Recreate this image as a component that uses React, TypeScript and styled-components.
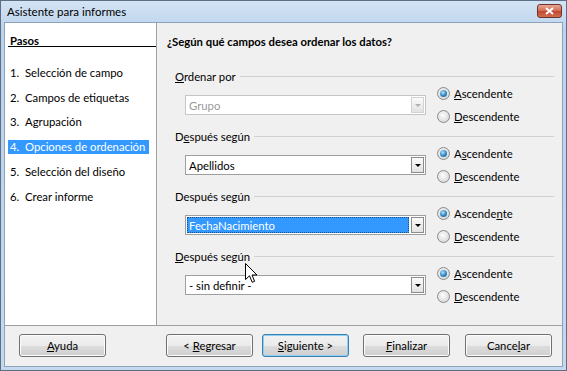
import React from 'react';
import styled, { createGlobalStyle } from 'styled-components';

const FONT = `Lato, "Noto Sans", "Liberation Sans", sans-serif`;

const GlobalStyle = createGlobalStyle`
  html, body { margin: 0; padding: 0; background: #fff; }
  body { font-family: ${FONT}; font-size: 11.3px; color: #000; }
`;

const Window = styled.div`
  position: relative;
  width: 567px;
  height: 371px;
  box-sizing: border-box;
  display: flex;
  flex-direction: column;
  border: 1px solid #5d6f86;
  background: linear-gradient(#d3e3f4, #bcd3ec 30px, #c4d8ee);
`;

const TitleBar = styled.div`
  height: 21px;
  display: flex;
  align-items: center;
  justify-content: space-between;
  padding: 0 4px 0 6px;
`;

const Title = styled.span`
  font-size: 11.5px;
  color: #000;
`;

const CloseButton = styled.div`
  width: 25px;
  height: 14px;
  margin-top: -2px;
  box-sizing: border-box;
  border: 1px solid #6b3329;
  border-radius: 3px;
  background: linear-gradient(#e8a895, #d26a52 50%, #c2452d 51%, #d06e4f);
  display: flex;
  align-items: center;
  justify-content: center;
`;

const Client = styled.div`
  flex: 1;
  margin: 0 3px 3px;
  border: 1px solid #8da2bb;
  background: #f0f0f0;
  display: flex;
  flex-direction: column;
`;

const Main = styled.div`
  height: 302px;
  display: flex;
  border-bottom: 1px solid #a0a0a0;
`;

const Sidebar = styled.div`
  width: 151px;
  background: #fff;
  border-right: 1px solid #a0a0a0;
  padding-top: 12px;
`;

const StepsHeader = styled.div`
  margin-left: 3px;
  padding-left: 2px;
  line-height: 11px;
  font-weight: bold;
  text-decoration: underline;
  border-bottom: 1px solid #000;
`;

const StepList = styled.div`
  margin-top: 13px;
`;

const StepRow = styled.div`
  height: 24.8px;
  display: flex;
  align-items: center;
  padding-left: 3px;
`;

const StepLabel = styled.div<{ $active?: boolean }>`
  width: 141px;
  height: 14px;
  display: flex;
  align-items: center;
  padding-left: 2px;
  box-sizing: border-box;
  background: ${({ $active }) => ($active ? '#3399ff' : 'transparent')};
  color: ${({ $active }) => ($active ? '#fff' : '#000')};
`;

const StepNum = styled.span`
  width: 15px;
`;

const Content = styled.div`
  flex: 1;
  padding: 11px 8px 0 10px;
`;

const Heading = styled.div`
  font-weight: bold;
  line-height: 16px;
  margin-bottom: 18px;
`;

const Group = styled.div`
  height: 60px;
  padding-left: 8px;
`;

const GroupHeader = styled.div`
  height: 16px;
  display: flex;
  align-items: center;
  gap: 4px;
  &::after {
    content: '';
    flex: 1;
    height: 1px;
    background: #d0d0d0;
  }
`;

const GroupBody = styled.div`
  display: flex;
  padding-left: 10px;
`;

const ComboSlot = styled.div`
  padding-top: 11px;
  margin-right: 11px;
`;

const Combo = styled.div<{ $disabled?: boolean }>`
  width: 241px;
  height: 20px;
  box-sizing: border-box;
  border: 1px solid ${({ $disabled }) => ($disabled ? '#c6c6c6' : '#9e9e9e')};
  background: #fff;
  padding: 1px;
  display: flex;
`;

const ComboText = styled.div<{ $disabled?: boolean; $selected?: boolean }>`
  flex: 1;
  display: flex;
  align-items: center;
  padding-left: 2px;
  margin-right: 2px;
  background: ${({ $selected }) => ($selected ? '#3399ff' : 'transparent')};
  color: ${({ $disabled, $selected }) => ($selected ? '#fff' : $disabled ? '#9a9a9a' : '#000')};
  outline: ${({ $selected }) => ($selected ? '1px dotted #1a4f88' : 'none')};
  outline-offset: -1px;
`;

const ComboButton = styled.div<{ $disabled?: boolean }>`
  width: 13px;
  box-sizing: border-box;
  border: 1px solid ${({ $disabled }) => ($disabled ? '#d2d2d2' : '#8c8c8c')};
  background: linear-gradient(#fafafa, #e2e2e2);
  display: flex;
  align-items: center;
  justify-content: center;
  &::after {
    content: '';
    border-left: 3px solid transparent;
    border-right: 3px solid transparent;
    border-top: 3px solid ${({ $disabled }) => ($disabled ? '#b0b0b0' : '#000')};
  }
`;

const Radios = styled.div`
  display: flex;
  flex-direction: column;
  margin-top: -2px;
`;

const RadioRow = styled.div`
  height: 23px;
  display: flex;
  align-items: center;
  gap: 4px;
`;

const RadioDot = styled.span<{ $checked?: boolean }>`
  width: 13px;
  height: 13px;
  box-sizing: border-box;
  border-radius: 50%;
  border: 1px solid #8a8a8a;
  background: radial-gradient(circle at 45% 40%, #fdfdfd, #dcdcdc 70%, #cfcfcf);
  display: flex;
  align-items: center;
  justify-content: center;
  &::after {
    content: '';
    width: 7px;
    height: 7px;
    border-radius: 50%;
    background: ${({ $checked }) =>
      $checked ? 'radial-gradient(circle at 40% 35%, #b9e4fb, #2c84c2 55%, #135a8e)' : 'transparent'};
  }
`;

const Key = styled.span`
  text-decoration: underline;
`;

const Footer = styled.div`
  flex: 1;
  display: flex;
  align-items: flex-start;
  padding: 8px 10px 0 13px;
`;

const Button = styled.div<{ $default?: boolean; $gap?: number }>`
  width: 87px;
  height: 23px;
  box-sizing: border-box;
  margin-left: ${({ $gap }) => ($gap ?? 0)}px;
  border: 1px solid ${({ $default }) => ($default ? '#3c7fb1' : '#707070')};
  border-radius: 3px;
  background: linear-gradient(#f2f2f2, #ebebeb 50%, #dddddd 51%, #cfcfcf);
  box-shadow: inset 0 0 0 1px ${({ $default }) => ($default ? '#8fd0f2' : '#fcfcfc')};
  display: flex;
  align-items: center;
  justify-content: center;
`;

const Spacer = styled.div`
  flex: 1;
`;

const Cursor = styled.svg`
  position: absolute;
  left: 244px;
  top: 262px;
`;

type Sort = {
  label: React.ReactNode;
  value: string;
  asc: React.ReactNode;
  desc: React.ReactNode;
  disabled?: boolean;
  selected?: boolean;
};

const sorts: Sort[] = [
  {
    label: <><Key>O</Key>rdenar por</>,
    value: 'Grupo',
    asc: <><Key>A</Key>scendente</>,
    desc: <><Key>D</Key>escendente</>,
    disabled: true,
  },
  {
    label: <>D<Key>e</Key>spués según</>,
    value: 'Apellidos',
    asc: <>A<Key>s</Key>cendente</>,
    desc: <><Key>D</Key>escendente</>,
  },
  {
    label: <>Después se<Key>g</Key>ún</>,
    value: 'FechaNacimiento',
    asc: <>Ascende<Key>n</Key>te</>,
    desc: <><Key>D</Key>escendente</>,
    selected: true,
  },
  {
    label: <><Key>D</Key>espués según</>,
    value: '- sin definir -',
    asc: <><Key>A</Key>scendente</>,
    desc: <><Key>D</Key>escendente</>,
  },
];

const steps = [
  'Selección de campo',
  'Campos de etiquetas',
  'Agrupación',
  'Opciones de ordenación',
  'Selección del diseño',
  'Crear informe',
];

const App = () => {
  return (
    <>
      <GlobalStyle />
      <Window>
        <TitleBar>
          <Title>Asistente para informes</Title>
          <CloseButton>
            <svg width="9" height="8" viewBox="0 0 9 8">
              <path d="M1 1 L8 7 M8 1 L1 7" stroke="#fff" strokeWidth="2" />
            </svg>
          </CloseButton>
        </TitleBar>
        <Client>
          <Main>
            <Sidebar>
              <StepsHeader>Pasos</StepsHeader>
              <StepList>
                {steps.map((s, i) => (
                  <StepRow key={s}>
                    <StepLabel $active={i === 3}>
                      <StepNum>{i + 1}.</StepNum>
                      <span>{s}</span>
                    </StepLabel>
                  </StepRow>
                ))}
              </StepList>
            </Sidebar>
            <Content>
              <Heading>¿Según qué campos desea ordenar los datos?</Heading>
              {sorts.map((s, i) => (
                <Group key={i}>
                  <GroupHeader><span>{s.label}</span></GroupHeader>
                  <GroupBody>
                    <ComboSlot>
                      <Combo $disabled={s.disabled}>
                        <ComboText $disabled={s.disabled} $selected={s.selected}>{s.value}</ComboText>
                        <ComboButton $disabled={s.disabled} />
                      </Combo>
                    </ComboSlot>
                    <Radios>
                      <RadioRow><RadioDot $checked /><span>{s.asc}</span></RadioRow>
                      <RadioRow><RadioDot /><span>{s.desc}</span></RadioRow>
                    </Radios>
                  </GroupBody>
                </Group>
              ))}
            </Content>
          </Main>
          <Footer>
            <Button $gap={1}><span><Key>A</Key>yuda</span></Button>
            <Spacer />
            <Button><span>&lt; <Key>R</Key>egresar</span></Button>
            <Button $default $gap={9}><span><Key>S</Key>iguiente &gt;</span></Button>
            <Button $gap={14}><span><Key>F</Key>inalizar</span></Button>
            <Button $gap={15}><span>Cance<Key>l</Key>ar</span></Button>
          </Footer>
        </Client>
        <Cursor width="13" height="21" viewBox="0 0 13 21">
          <path d="M0.5 0.5 L0.5 16.5 L4.5 12.8 L7.2 19.3 L9.6 18.3 L7 12 L12 12 Z" fill="#fff" stroke="#000" strokeWidth="1" strokeLinejoin="miter" />
        </Cursor>
      </Window>
    </>
  );
};

export default App;
